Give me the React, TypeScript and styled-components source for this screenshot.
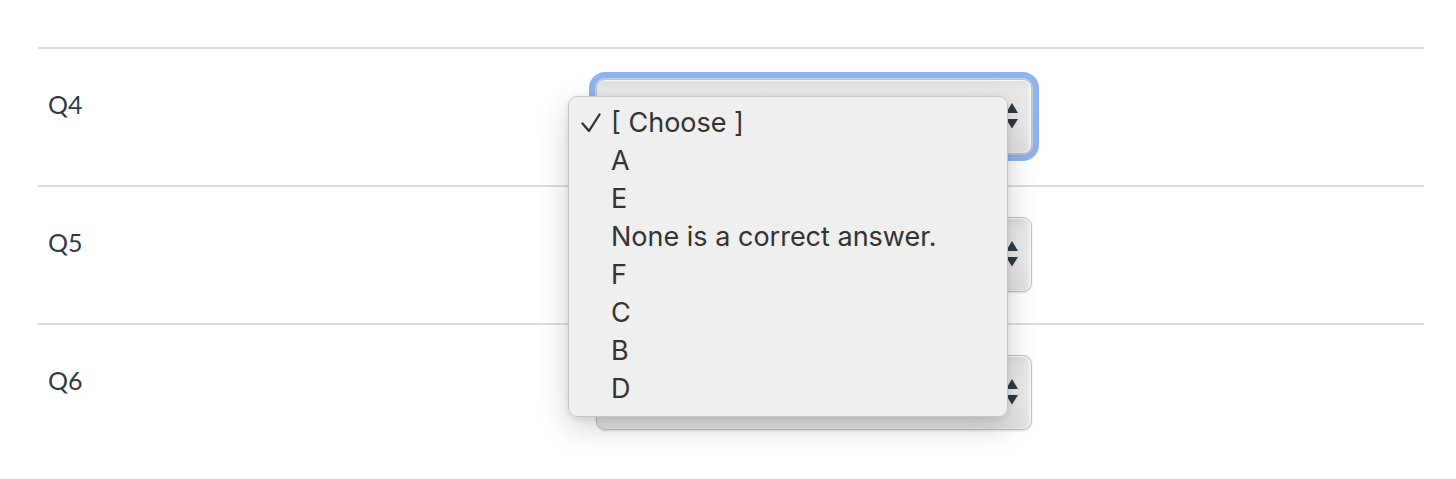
import styled, { createGlobalStyle } from "styled-components";

const GlobalStyle = createGlobalStyle`
  html, body {
    margin: 0;
    padding: 0;
    background: #ffffff;
  }
  body {
    font-family: Lato, "Noto Sans", sans-serif;
  }
`;

const Page = styled.div`
  padding: 47px 32px 0 38px;
`;

const Row = styled.div`
  display: grid;
  grid-template-columns: 558px 436px 1fr;
  height: 138px;
  box-sizing: border-box;
  border-top: 2px solid #dcdcdc;
`;

const Label = styled.div`
  font-family: Lato, sans-serif;
  font-size: 25px;
  line-height: 1;
  color: #2d3b45;
  padding: 43px 0 0 10px;
`;

const SelectWrap = styled.div`
  position: relative;
  align-self: center;
  margin-top: -2px;
`;

const SelectFace = styled.div<{ $focused?: boolean }>`
  height: 75px;
  box-sizing: border-box;
  border-radius: 9px;
  border: 1px solid #c1c1c1;
  background: linear-gradient(to bottom, #dcdcdc 0%, #e8e8e8 12%, #eaeaea 60%, #e1e1e1 100%);
  box-shadow: inset 0 1px 1px rgba(255, 255, 255, 0.8), inset -2px 0 2px rgba(255, 255, 255, 0.6),
    0 1px 2px rgba(0, 0, 0, 0.14)
    ${(p) => (p.$focused ? ", 0 0 0 1px #cdd6e6, 0 0 0 7px #8fb3f0" : "")};
  display: flex;
  align-items: center;
  justify-content: flex-end;
  padding-right: 13px;
`;

const Menu = styled.div`
  position: absolute;
  left: -28px;
  top: 17px;
  width: 440px;
  box-sizing: border-box;
  padding: 7px 0 8px;
  background: rgba(239, 239, 239, 0.98);
  border: 1px solid #c6c6c6;
  border-radius: 9px;
  box-shadow: 0 10px 30px rgba(0, 0, 0, 0.18), 0 2px 6px rgba(0, 0, 0, 0.08);
  z-index: 2;
`;

const Item = styled.div`
  display: flex;
  align-items: center;
  height: 38px;
  font-family: Inter, "Liberation Sans", sans-serif;
  font-size: 27px;
  color: #333333;
`;

const CheckSlot = styled.div`
  width: 42px;
  display: flex;
  justify-content: flex-end;
  padding-right: 10px;
  box-sizing: border-box;
`;

const Arrows = () => (
  <svg width="12" height="26" viewBox="0 0 12 26">
    <path d="M6 0 L12 10 L0 10 Z" fill="#2d3b45" />
    <path d="M0 16 L12 16 L6 25.5 Z" fill="#2d3b45" />
  </svg>
);

const Check = () => (
  <svg width="20" height="20" viewBox="0 0 20 20">
    <path d="M1.5 10.5 L8 18 L18.5 1.5" fill="none" stroke="#333" strokeWidth="2.3" strokeLinecap="round" strokeLinejoin="round" />
  </svg>
);

const options = ["[ Choose ]", "A", "E", "None is a correct answer.", "F", "C", "B", "D"];

const App = () => {
  const questions = ["Q4", "Q5", "Q6"];
  return (
    <>
      <GlobalStyle />
      <Page>
        {questions.map((q, i) => (
          <Row key={q}>
            <Label>{q}</Label>
            <SelectWrap>
              <SelectFace $focused={i === 0}>
                <Arrows />
              </SelectFace>
              {i === 0 && (
                <Menu>
                  {options.map((o, j) => (
                    <Item key={o}>
                      <CheckSlot>{j === 0 && <Check />}</CheckSlot>
                      {o}
                    </Item>
                  ))}
                </Menu>
              )}
            </SelectWrap>
          </Row>
        ))}
      </Page>
    </>
  );
};

export default App;
